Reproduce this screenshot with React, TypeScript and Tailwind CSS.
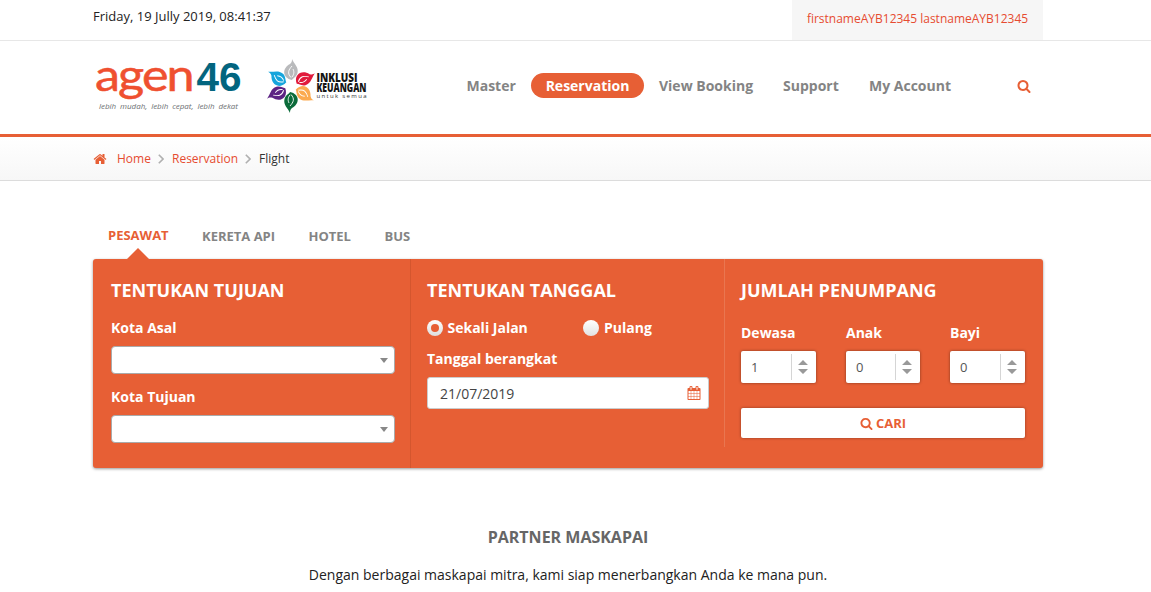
import type { ReactNode } from "react";

const SEARCH =
  "M1216 832q0-185-131.5-316.5t-316.5-131.5-316.5 131.5-131.5 316.5 131.5 316.5 316.5 131.5 316.5-131.5 131.5-316.5zm512 832q0 52-38 90t-90 38q-54 0-90-38l-343-342q-179 124-399 124-143 0-273.5-55.5t-225-150-150-225-55.5-273.5 55.5-273.5 150-225 225-150 273.5-55.5 273.5 55.5 225 150 150 225 55.5 273.5q0 220-124 399l343 343q37 37 37 90z";
const HOME =
  "M1472 992v480q0 26-19 45t-45 19h-384v-384h-256v384h-384q-26 0-45-19t-19-45v-480q0-1 .5-3t.5-3l575-474 575 474q1 2 1 6zm223-69l-62 74q-8 9-21 11h-3q-13 0-21-7l-692-577-692 577q-12 8-24 7-13-2-21-11l-62-74q-8-10-7-23.5t11-21.5l719-599q32-26 76-26t76 26l244 204v-195q0-14 9-23t23-9h192q14 0 23 9t9 23v408l219 182q10 8 11 21.5t-7 23.5z";
const CALENDAR =
  "M192 1664h288v-288h-288v288zm352 0h320v-288h-320v288zm-352-352h288v-320h-288v320zm352 0h320v-320h-320v320zm-352-384h288v-288h-288v288zm736 736h320v-288h-320v288zm-384-736h320v-288h-320v288zm768 736h288v-288h-288v288zm-384-352h320v-320h-320v320zm-352-864v-288q0-13-9.5-22.5t-22.5-9.5h-64q-13 0-22.5 9.5t-9.5 22.5v288q0 13 9.5 22.5t22.5 9.5h64q13 0 22.5-9.5t9.5-22.5zm736 864h288v-320h-288v320zm-384-384h320v-288h-320v288zm384 0h288v-288h-288v288zm32-480v-288q0-13-9.5-22.5t-22.5-9.5h-64q-13 0-22.5 9.5t-9.5 22.5v288q0 13 9.5 22.5t22.5 9.5h64q13 0 22.5-9.5t9.5-22.5zm384-64v1280q0 52-38 90t-90 38h-1408q-52 0-90-38t-38-90v-1280q0-52 38-90t90-38h128v-96q0-66 47-113t113-47h64q66 0 113 47t47 113v96h384v-96q0-66 47-113t113-47h64q66 0 113 47t47 113v96h128q52 0 90 38t38 90z";

function Icon({ d, className }: { d: string; className: string }) {
  return (
    <svg viewBox="0 0 1792 1792" fill="currentColor" className={className}>
      <path d={d} />
    </svg>
  );
}

function AgenLogo() {
  return (
    <svg width="150" height="60" viewBox="0 0 150 60" className="shrink-0 overflow-visible">
      <text transform="translate(2 32.5) scale(1.12 1)" fontFamily="Lato, sans-serif" fontSize="45" fill="#ef5030" stroke="#ef5030" strokeWidth=".5" textLength="89" lengthAdjust="spacing">agen</text>
      <text x="103.5" y="33" fontFamily="'Liberation Sans', sans-serif" fontWeight="700" fontSize="41" fill="#03657f" textLength="45" lengthAdjust="spacingAndGlyphs">46</text>
      <text x="6" y="51" fontFamily="'Open Sans', sans-serif" fontStyle="italic" fontSize="8" fill="#6d7074" wordSpacing="2" textLength="139">lebih mudah, lebih cepat, lebih dekat</text>
    </svg>
  );
}

const PETALS = [
  { angle: 0, color: "#b9babc" },
  { angle: 60, color: "#e11b3c" },
  { angle: 120, color: "#fbaa50" },
  { angle: 180, color: "#0b6b3a" },
  { angle: 240, color: "#5c2384" },
  { angle: 300, color: "#16a5dc" },
];

function InklusiLogo() {
  return (
    <svg width="100" height="56" viewBox="0 0 100 56" className="shrink-0 overflow-visible">
      {PETALS.map((p) => (
        <g key={p.color} transform={`translate(23 28) rotate(${p.angle})`}>
          <path d="M1-6C-9-8-9-18-1-22C1-24 1-25 1-27C3-22 8-19 6.500-13C5.500-9 2-8 1-6Z" fill={p.color} />
          <path d="M0-8.500C-4-13-2.500-16 1-20M1-9C3.500-12 3-15 2-17" fill="none" stroke="#fff" strokeWidth=".9" />
        </g>
      ))}
      <text x="48.500" y="23.700" fontFamily="'Open Sans', sans-serif" fontWeight="800" fontSize="12.5" fill="#151515" textLength="41" lengthAdjust="spacingAndGlyphs">INKLUSI</text>
      <text x="48.500" y="34" fontFamily="'Open Sans', sans-serif" fontWeight="800" fontSize="11.5" fill="#151515" textLength="50" lengthAdjust="spacingAndGlyphs">KEUANGAN</text>
      <text x="48.500" y="40" fontFamily="'Open Sans', sans-serif" fontSize="6" fill="#333" textLength="50">untuk semua</text>
    </svg>
  );
}

function Chevron() {
  return (
    <svg width="6" height="10" viewBox="0 0 6 10" className="shrink-0" fill="none" stroke="#b0b0b0" strokeWidth="1.6">
      <path d="M.8.8 5 5 .8 9.2" />
    </svg>
  );
}

function Heading({ children }: { children: ReactNode }) {
  return <h2 className="h-6 text-[18px] font-bold leading-6">{children}</h2>;
}

function SelectBox() {
  return (
    <div className="flex h-7 w-[284px] items-center justify-end rounded-[4px] border border-[#aaa] bg-white pr-1.5">
      <svg width="8" height="5" viewBox="0 0 8 5"><path d="M0 0h8L4 5z" fill="#888" /></svg>
    </div>
  );
}

function Spinner({ label, value, className }: { label: string; value: string; className: string }) {
  return (
    <div className={className}>
      <div className="h-5 text-[14px] font-bold leading-5">{label}</div>
      <div className="mt-2 flex h-8 items-center rounded-[2px] bg-white shadow-[0_0_3px_rgba(0,0,0,0.45)]">
        <span className="flex-1 pl-2.5 pt-0.5 text-[13px] text-[#555]">{value}</span>
        <span className="flex h-[26px] w-[25px] items-center justify-center border-l border-[#d5d5d5] pr-0.5">
          <svg width="10" height="14" viewBox="0 0 10 14" fill="#999"><path d="M5 0l5 5H0zM0 9h10L5 14z" /></svg>
        </span>
      </div>
    </div>
  );
}

export default function App() {
  return (
    <div className="h-[592px] overflow-hidden bg-white font-['Open_Sans',sans-serif] text-[13px] text-[#222]">
      <div className="h-[41px] border-b border-[#e7e7e7]">
        <div className="ml-[93px] flex h-10 w-[950px] justify-between">
          <span className="mt-[6px] h-5 whitespace-nowrap leading-5">Friday, 19 Jully 2019, 08:41:37</span>
          <a className="flex h-10 w-[251px] items-center justify-center whitespace-nowrap bg-[#f6f6f6] pb-[2px] text-[12px] text-[#e64b30]">firstnameAYB12345 lastnameAYB12345</a>
        </div>
      </div>

      <header className="h-24 border-b-[3px] border-[#e75f35]">
        <div className="ml-[93px] flex w-[950px]">
          <div className="flex w-[359px] gap-[25px] pt-[17px]">
            <AgenLogo />
            <InklusiLogo />
          </div>
          <nav className="mt-8 flex h-[25px] text-[14px] font-bold leading-[25px] text-[#848484]">
            <a className="w-[79px] pl-[14.5px]">Master</a>
            <a className="w-[113px] rounded-full bg-[#e75f35] text-center text-white">Reservation</a>
            <a className="w-[124px] pl-[15px] whitespace-nowrap">View Booking</a>
            <a className="w-[86px] pl-[15px]">Support</a>
            <a className="w-[112px] pl-[15px] whitespace-nowrap">My Account</a>
          </nav>
          <Icon d={SEARCH} className="ml-[51px] mt-[38px] size-[14px] text-[#e75f35]" />
        </div>
      </header>

      <div className="h-11 border-b border-[#dcdcdc] bg-linear-to-b from-white to-[#f7f7f7]">
        <div className="ml-[93px] flex h-[43px] items-center text-[12px] text-[#e64b30]">
          <Icon d={HOME} className="size-[14px] text-[#e75f35]" />
          <a className="ml-[10px] w-[41px]">Home</a>
          <Chevron />
          <a className="ml-2 w-[73px]">Reservation</a>
          <Chevron />
          <span className="ml-2 text-[#333]">Flight</span>
        </div>
      </div>

      <main className="ml-[93px] w-[950px] pt-11">
        <div className="flex h-[34px] text-[13px] font-bold leading-5 text-[#848484]">
          <div className="flex w-[94px] flex-col pl-[15px] text-[#e75f35]">
            <span>PESAWAT</span>
            <svg width="22" height="11" viewBox="0 0 22 11" className="ml-[19px] mt-[3px]" fill="#e75f35"><path d="M11 0l11 11H0z" /></svg>
          </div>
          <span className="w-[107px] pl-[15px] pt-px">KERETA API</span>
          <span className="w-[75.500px] pl-[14.500px] pt-px">HOTEL</span>
          <span className="pl-[15px] pt-px">BUS</span>
        </div>

        <section className="flex h-[209px] rounded-[3px] bg-[#e75f35] text-white shadow-[0_1px_3px_rgba(0,0,0,0.4)]">
          <div className="w-[318px] border-r border-[#d4562e] pl-[18px] pt-[19px]">
            <Heading>TENTUKAN TUJUAN</Heading>
            <div className="mt-4 h-5 text-[14px] font-bold leading-5">Kota Asal</div>
            <div className="mt-2"><SelectBox /></div>
            <div className="mb-2 mt-[13px] h-5 text-[14px] font-bold leading-5">Kota Tujuan</div>
            <SelectBox />
          </div>
          <div className="h-[188px] w-[314px] border-r border-[#e97650] pl-4 pt-[19px]">
            <Heading>TENTUKAN TANGGAL</Heading>
            <div className="mt-4 flex h-5 items-center text-[14px] font-bold leading-5">
              <span className="flex size-4 items-center justify-center rounded-full bg-linear-to-b from-white to-[#ddd]">
                <span className="size-2 rounded-full bg-[#e75f35]" />
              </span>
              <span className="w-[140px] pl-[4.500px]">Sekali Jalan</span>
              <span className="size-4 rounded-full bg-linear-to-b from-white to-[#e2e2e2]" />
              <span className="pl-[5px]">Pulang</span>
            </div>
            <div className="mt-[11px] h-5 text-[14px] font-bold leading-5">Tanggal berangkat</div>
            <div className="mt-2 flex h-8 w-[282px] items-center justify-between rounded-[3px] border border-[#ccc] bg-white pl-3 pr-[7px] text-[14px] text-[#444]">
              <span>21/07/2019</span>
              <Icon d={CALENDAR} className="size-[14px] text-[#e75f35]" />
            </div>
          </div>
          <div className="pl-4 pt-[19px]">
            <Heading>JUMLAH PENUMPANG</Heading>
            <div className="mt-[21px] flex w-[284px] justify-between">
              <Spinner label="Dewasa" value="1" className="w-[75px]" />
              <Spinner label="Anak" value="0" className="w-[74px]" />
              <Spinner label="Bayi" value="0" className="w-[75px]" />
            </div>
            <button className="mt-[25px] flex h-[30px] w-[284px] items-center justify-center gap-[3px] rounded-[2px] bg-white text-[13px] font-bold text-[#e75f35] shadow-[0_0_3px_rgba(0,0,0,0.4)]">
              <Icon d={SEARCH} className="size-[13px]" />
              <span className="pt-px">CARI</span>
            </button>
          </div>
        </section>

        <h3 className="mt-[57px] text-center text-[16px] font-bold leading-6 text-[#666]">PARTNER MASKAPAI</h3>
        <p className="mt-[14px] text-center text-[14px] leading-6">Dengan berbagai maskapai mitra, kami siap menerbangkan Anda ke mana pun.</p>
      </main>
    </div>
  );
}
